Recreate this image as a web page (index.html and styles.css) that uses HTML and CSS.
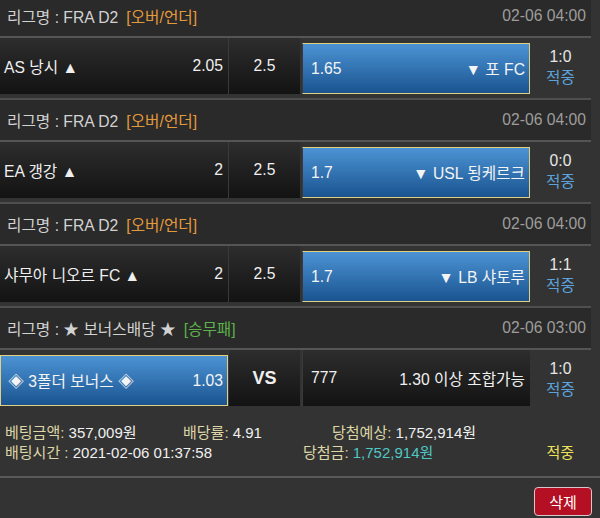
FILE: index.html
```html
<!DOCTYPE html>
<html lang="ko">
<head>
  <meta charset="UTF-8">
  <title>배팅내역</title>
  <link rel="stylesheet" href="styles.css">
</head>
<body>
  <div class="bet-list">
    <!-- 경기 1 -->
    <div class="game">
      <div class="game-head">
        <span class="league">리그명 : FRA D2</span>
        <span class="type type-ou">[오버/언더]</span>
        <span class="date">02-06 04:00</span>
      </div>
      <div class="game-row">
        <div class="cell team"><span>AS 낭시 ▲</span><span>2.05</span></div>
        <div class="cell mid">2.5</div>
        <div class="cell team picked"><span>1.65</span><span>▼ 포 FC</span></div>
        <div class="score">1:0<span class="hit">적중</span></div>
      </div>
    </div>

    <!-- 경기 2 -->
    <div class="game">
      <div class="game-head">
        <span class="league">리그명 : FRA D2</span>
        <span class="type type-ou">[오버/언더]</span>
        <span class="date">02-06 04:00</span>
      </div>
      <div class="game-row">
        <div class="cell team"><span>EA 갱강 ▲</span><span>2</span></div>
        <div class="cell mid">2.5</div>
        <div class="cell team picked"><span>1.7</span><span>▼ USL 됭케르크</span></div>
        <div class="score">0:0<span class="hit">적중</span></div>
      </div>
    </div>

    <!-- 경기 3 -->
    <div class="game">
      <div class="game-head">
        <span class="league">리그명 : FRA D2</span>
        <span class="type type-ou">[오버/언더]</span>
        <span class="date">02-06 04:00</span>
      </div>
      <div class="game-row">
        <div class="cell team"><span>샤무아 니오르 FC ▲</span><span>2</span></div>
        <div class="cell mid">2.5</div>
        <div class="cell team picked"><span>1.7</span><span>▼ LB 샤토루</span></div>
        <div class="score">1:1<span class="hit">적중</span></div>
      </div>
    </div>

    <!-- 보너스 -->
    <div class="game">
      <div class="game-head">
        <span class="league">리그명 : ★ 보너스배당 ★</span>
        <span class="type type-wdl">[승무패]</span>
        <span class="date">02-06 03:00</span>
      </div>
      <div class="game-row">
        <div class="cell team picked"><span>◈ 3폴더 보너스 ◈</span><span>1.03</span></div>
        <div class="cell mid vs">VS</div>
        <div class="cell team"><span>777</span><span>1.30 이상 조합가능</span></div>
        <div class="score">1:0<span class="hit">적중</span></div>
      </div>
    </div>
  </div>

  <div class="summary">
    <div class="summary-line">
      <span class="item item-amount"><em>베팅금액:</em> 357,009원</span>
      <span class="item item-rate"><em>배당률:</em> 4.91</span>
      <span class="item item-expect"><em>당첨예상:</em> 1,752,914원</span>
    </div>
    <div class="summary-line">
      <span class="item item-time"><em>배팅시간 :</em> 2021-02-06 01:37:58</span>
      <span class="item item-win"><em>당첨금:</em> <b>1,752,914원</b></span>
      <span class="result">적중</span>
    </div>
  </div>

  <div class="actions">
    <button class="btn-delete">삭제</button>
  </div>
</body>
</html>
```

FILE: styles.css
```css
body {
  margin: 0;
  background-color: #333333;
  color: #e8e8e8;
  font-family: "Liberation Sans", "Noto Sans CJK KR", sans-serif;
  font-size: 15px;
  overflow: hidden;
}

/* 목록이 살짝 스크롤 된 상태 */
.bet-list {
  width: 591px;
  margin-top: -6px;
  font-size: 15.7px;
}

.game {
  border-top: 2px solid #4f4f4f;
  padding-bottom: 4px;
}

.game-head {
  display: flex;
  align-items: center;
  height: 40px;
  padding: 0 5px 0 7px;
  background-color: #2a2a2a;
  border-bottom: 2px solid #555555;
  color: #d2d2d2;
}
.game-head .type {
  margin-left: 8px;
}
.type-ou {
  color: #e39a3c;
}
.type-wdl {
  color: #5cb24a;
}
.game-head .date {
  margin-left: auto;
  color: #9d9d9d;
}

.game-row {
  display: flex;
  height: 56px;
}

.cell {
  display: flex;
  align-items: center;
  background: linear-gradient(#2d2d2d, #131313);
  color: #efefef;
}
.team {
  width: 228px;
  box-sizing: border-box;
  justify-content: space-between;
  padding: 0 5px 0 4px;
}
.mid {
  width: 71px;
  justify-content: center;
  border-left: 1px solid #3a3a3a;
  margin-right: 2px;
}
.mid + .team {
  border-left: 1px solid #3a3a3a;
  padding-left: 8px;
}
.vs {
  font-weight: bold;
  font-size: 18px;
}

.picked {
  margin-top: 5px;
  background: linear-gradient(#4c93d4, #1a5490);
  border: 1px solid #e2cf82;
  padding: 0 4px 0 7px;
  color: #f4f4f4;
}

.score {
  flex: 1;
  display: flex;
  flex-direction: column;
  align-items: center;
  justify-content: center;
  padding-top: 1px;
  line-height: 21px;
  color: #e6e6e6;
}
.score .hit {
  color: #5ba2dc;
}

.summary {
  padding: 11px 0 0 5px;
  height: 55px;
  border-bottom: 2px solid #5a5a5a;
  width: 595px;
}
.summary-line {
  display: flex;
  height: 20px;
  align-items: center;
}
.summary em {
  font-style: normal;
  color: #ddd6a6;
}
.item {
  color: #f0f0f0;
}
.item-amount {
  width: 178px;
}
.item-rate {
  width: 149px;
}
.item-time {
  width: 298px;
}
.item-win b {
  font-weight: normal;
  color: #4fc7c4;
}
.result {
  margin-left: auto;
  margin-right: 26px;
  color: #ede25a;
}

.actions {
  display: flex;
  justify-content: flex-end;
  padding: 9px 8px 0 0;
}
.btn-delete {
  width: 58px;
  height: 29px;
  border: 1px solid #d6c7c9;
  border-radius: 4px;
  background-color: #b50f24;
  color: #ffffff;
  font-family: "Noto Sans CJK KR", sans-serif;
  font-size: 15px;
  cursor: pointer;
}
```
